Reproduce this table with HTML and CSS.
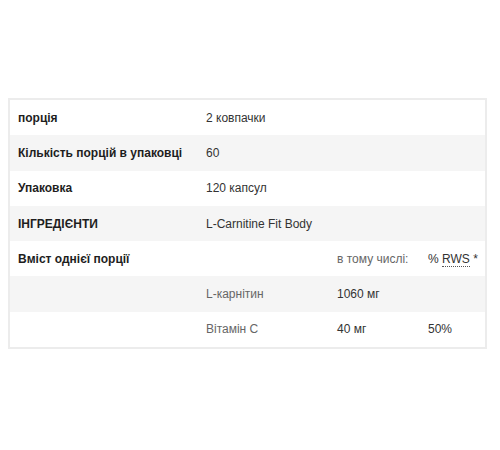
FILE: index.html
```html
<!DOCTYPE html>
<html lang="uk">
<head>
<meta charset="utf-8">
<link rel="stylesheet" href="styles.css">
</head>
<body>
<div class="page">
  <div class="table">
    <div class="row">
      <div class="label">порція</div>
      <div class="value span">2 ковпачки</div>
    </div>
    <div class="row alt">
      <div class="label">Кількість порцій в упаковці</div>
      <div class="value span">60</div>
    </div>
    <div class="row">
      <div class="label">Упаковка</div>
      <div class="value span">120 капсул</div>
    </div>
    <div class="row alt">
      <div class="label">ІНГРЕДІЄНТИ</div>
      <div class="value span">L-Carnitine Fit Body</div>
    </div>
    <div class="row">
      <div class="label">Вміст однієї порції</div>
      <div class="cell"></div>
      <div class="cell muted">в тому числі:</div>
      <div class="cell value">% <abbr class="rws" title="RWS">RWS</abbr> *</div>
    </div>
    <div class="row alt">
      <div class="label"></div>
      <div class="cell muted">L-карнітин</div>
      <div class="cell value">1060 мг</div>
      <div class="cell"></div>
    </div>
    <div class="row">
      <div class="label"></div>
      <div class="cell muted">Вітамін C</div>
      <div class="cell value">40 мг</div>
      <div class="cell value">50%</div>
    </div>
  </div>
</div>
</body>
</html>
```

FILE: styles.css
```css
html, body {
  margin: 0;
  padding: 0;
  background: #ffffff;
}
body {
  font-family: "Liberation Sans", Arial, sans-serif;
  font-size: 12px;
  color: #222;
}
.page {
  padding: 98px 0 0 8px;
}
.table {
  width: 475px;
  border: 2px solid #ececec;
}
.row {
  display: grid;
  grid-template-columns: 188px 131px 91px 1fr;
  height: 35.3px;
  align-items: center;
  background: #ffffff;
}
.row.alt {
  background: #f5f5f5;
}
.label {
  padding-left: 8px;
  font-weight: bold;
  color: #1e1e1e;
}
.cell, .value {
  padding-left: 8px;
}
.span {
  grid-column: 2 / 5;
}
.value {
  color: #333;
}
.muted {
  color: #666;
}
.rws {
  text-decoration: none;
  border-bottom: 1px dotted #555;
}
```
